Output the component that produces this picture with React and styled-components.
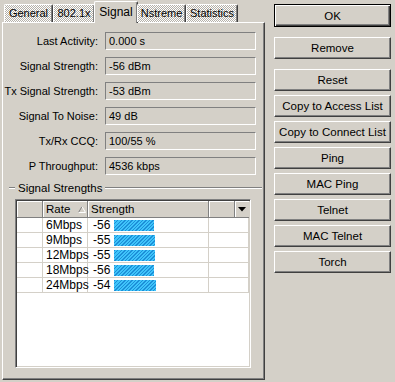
import React from "react";
import styled, { createGlobalStyle } from "styled-components";

const Global = createGlobalStyle`
  html, body { margin: 0; padding: 0; background: #d4d0c8; }
  body { font-family: "Liberation Sans", Arial, sans-serif; font-size: 11px; color: #000; }
`;

const Window = styled.div`
  width: 395px;
  height: 382px;
  display: flex;
  background: #d4d0c8;
  overflow: hidden;
`;

const LeftPane = styled.div`
  width: 263px;
  padding: 1px 0 0 2px;
  display: flex;
  flex-direction: column;
`;

const TabBar = styled.div`
  height: 21px;
  display: flex;
  align-items: flex-end;
  padding-left: 2px;
  position: relative;
  z-index: 1;
`;

const Tab = styled.div`
  box-sizing: border-box;
  width: ${(p) => p.$w}px;
  height: ${(p) => (p.$active ? 22 : 18)}px;
  margin: ${(p) => (p.$active ? "0 -1px -1px -1px" : "0")};
  padding: ${(p) => (p.$active ? "3px 0 0 0" : "2px 0 0 0")};
  text-align: center;
  border-top: 1px solid #fff;
  border-left: 1px solid #fff;
  border-right: 1px solid #404040;
  box-shadow: inset -1px 0 #808080;
  border-radius: 2px 2px 0 0;
  background: ${(p) =>
    p.$active
      ? "#d4d0c8"
      : "conic-gradient(#ffffff 25%, #b4b0a8 0 50%, #ffffff 0 75%, #b4b0a8 0)"};
  background-size: 2px 2px;
  font-size: ${(p) => (p.$active ? 12 : 11)}px;
  white-space: nowrap;
`;

const Panel = styled.div`
  box-sizing: border-box;
  width: 263px;
  height: 358px;
  border-top: 1px solid #fff;
  border-left: 1px solid #fff;
  border-right: 1px solid #404040;
  border-bottom: 1px solid #404040;
  box-shadow: inset -1px -1px #808080;
  padding-top: 9px;
  display: flex;
  flex-direction: column;
`;

const Fields = styled.div`
  display: grid;
  grid-template-columns: 95px 151px;
  grid-auto-rows: 18px;
  column-gap: 7px;
  row-gap: 7px;
`;

const Label = styled.div`
  text-align: right;
  line-height: 18px;
  white-space: nowrap;
`;

const Field = styled.div`
  box-sizing: border-box;
  border-top: 1px solid #808080;
  border-left: 1px solid #808080;
  border-right: 1px solid #fff;
  border-bottom: 1px solid #fff;
  padding-left: 3px;
  line-height: 16px;
  white-space: nowrap;
`;

const GroupHeader = styled.div`
  margin-top: 6px;
  height: 14px;
  display: flex;
  align-items: center;
  padding-left: 6px;
  width: 253px;
`;

const Etch = styled.div`
  height: 0;
  border-top: 1px solid #808080;
  border-bottom: 1px solid #fff;
  flex: ${(p) => (p.$grow ? 1 : "none")};
  width: ${(p) => (p.$w ? p.$w + "px" : "auto")};
`;

const GroupTitle = styled.span`
  padding: 0 3px;
  font-size: 11.5px;
  white-space: nowrap;
`;

const Table = styled.div`
  box-sizing: border-box;
  margin: 4px 0 0 12px;
  width: 236px;
  height: 169px;
  border-top: 1px solid #808080;
  border-left: 1px solid #808080;
  border-right: 1px solid #fff;
  border-bottom: 1px solid #fff;
  box-shadow: inset 1px 1px #404040, inset -1px -1px #d4d0c8;
  padding: 1px;
  background: #fff;
  display: flex;
  flex-direction: column;
`;

const HeaderRow = styled.div`
  display: grid;
  grid-template-columns: 26px 45px 121px 26px 1fr;
  height: 17px;
  background: #d4d0c8;
`;

const HeaderCell = styled.div`
  box-sizing: border-box;
  border-right: 1px solid #808080;
  border-bottom: 1px solid #808080;
  box-shadow: inset 1px 1px #fff;
  padding-left: 3px;
  line-height: 16px;
  display: flex;
  align-items: center;
  justify-content: ${(p) => (p.$center ? "center" : "flex-start")};
  gap: 8px;
  font-size: 11.5px;
  ${(p) => (p.$center ? "padding-left: 0; border-right: none;" : "")}
`;

const Row = styled.div`
  display: grid;
  grid-template-columns: 26px 45px 121px 1fr;
  height: 15px;
`;

const Cell = styled.div`
  box-sizing: border-box;
  border-right: 1px solid #d4d0c8;
  border-bottom: 1px solid #d4d0c8;
  padding-left: ${(p) => p.$pl || 3}px;
  line-height: 14px;
  display: flex;
  align-items: center;
  font-size: 12px;
  white-space: nowrap;
`;

const Value = styled.span`
  width: 21px;
`;

const Bar = styled.div`
  height: 11px;
  background: repeating-linear-gradient(
    135deg,
    #1c8fd8 0px,
    #1c8fd8 1px,
    #3fc4fa 1px,
    #3fc4fa 2.5px
  );
`;

const RightPane = styled.div`
  padding: 4px 0 0 9px;
  display: flex;
  flex-direction: column;
  width: 117px;
`;

const Button = styled.div`
  box-sizing: border-box;
  width: 117px;
  height: ${(p) => (p.$default ? 23 : 22)}px;
  margin-bottom: ${(p) => p.$mb}px;
  display: flex;
  align-items: center;
  justify-content: center;
  font-size: 11.5px;
  background: #d4d0c8;
  border: 1px solid;
  border-color: ${(p) => (p.$default ? "#000" : "#fff #404040 #404040 #fff")};
  box-shadow: ${(p) =>
    p.$default
      ? "inset 1px 1px #fff, inset -1px -1px #404040, inset -2px -2px #808080"
      : "inset -1px -1px #808080"};
  white-space: nowrap;
`;

const fields = [
  ["Last Activity:", "0.000 s"],
  ["Signal Strength:", "-56 dBm"],
  ["Tx Signal Strength:", "-53 dBm"],
  ["Signal To Noise:", "49 dB"],
  ["Tx/Rx CCQ:", "100/55 %"],
  ["P Throughput:", "4536 kbps"],
];

const rates = [
  ["6Mbps", "-56", 40],
  ["9Mbps", "-55", 41],
  ["12Mbps", "-55", 41],
  ["18Mbps", "-56", 40],
  ["24Mbps", "-54", 42],
];

const tabs = [
  ["General", 49],
  ["802.1x", 42],
  ["Signal", 44, true],
  ["Nstreme", 49],
  ["Statistics", 52],
];

const buttons = [
  ["OK", 10, true],
  ["Remove", 10],
  ["Reset", 4],
  ["Copy to Access List", 4],
  ["Copy to Connect List", 4],
  ["Ping", 4],
  ["MAC Ping", 4],
  ["Telnet", 4],
  ["MAC Telnet", 4],
  ["Torch", 4],
];

export default function App() {
  return (
    <>
      <Global />
      <Window>
        <LeftPane>
          <TabBar>
            {tabs.map(([t, w, a]) => (
              <Tab key={t} $w={w} $active={a}>
                {t}
              </Tab>
            ))}
          </TabBar>
          <Panel>
            <Fields>
              {fields.map(([l, v]) => (
                <React.Fragment key={l}>
                  <Label>{l}</Label>
                  <Field>{v}</Field>
                </React.Fragment>
              ))}
            </Fields>
            <GroupHeader>
              <Etch $w={6} />
              <GroupTitle>Signal Strengths</GroupTitle>
              <Etch $grow />
            </GroupHeader>
            <Table>
              <HeaderRow>
                <HeaderCell />
                <HeaderCell>
                  Rate
                  <svg width="8" height="7" viewBox="0 0 8 7">
                    <path d="M0.5 6.5 L4 0.5" stroke="#808080" fill="none" />
                    <path d="M4 0.5 L7.5 6.5 L0.5 6.5" stroke="#fff" fill="none" />
                  </svg>
                </HeaderCell>
                <HeaderCell>Strength</HeaderCell>
                <HeaderCell />
                <HeaderCell $center>
                  <svg width="8" height="5" viewBox="0 0 8 5">
                    <path d="M0 0 H8 L4 4.5 Z" fill="#000" />
                  </svg>
                </HeaderCell>
              </HeaderRow>
              {rates.map(([r, v, w]) => (
                <Row key={r}>
                  <Cell />
                  <Cell>{r}</Cell>
                  <Cell $pl={5}>
                    <Value>{v}</Value>
                    <Bar style={{ width: w }} />
                  </Cell>
                  <Cell />
                </Row>
              ))}
            </Table>
          </Panel>
        </LeftPane>
        <RightPane>
          {buttons.map(([t, mb, d]) => (
            <Button key={t} $mb={mb} $default={d}>
              {t}
            </Button>
          ))}
        </RightPane>
      </Window>
    </>
  );
}
